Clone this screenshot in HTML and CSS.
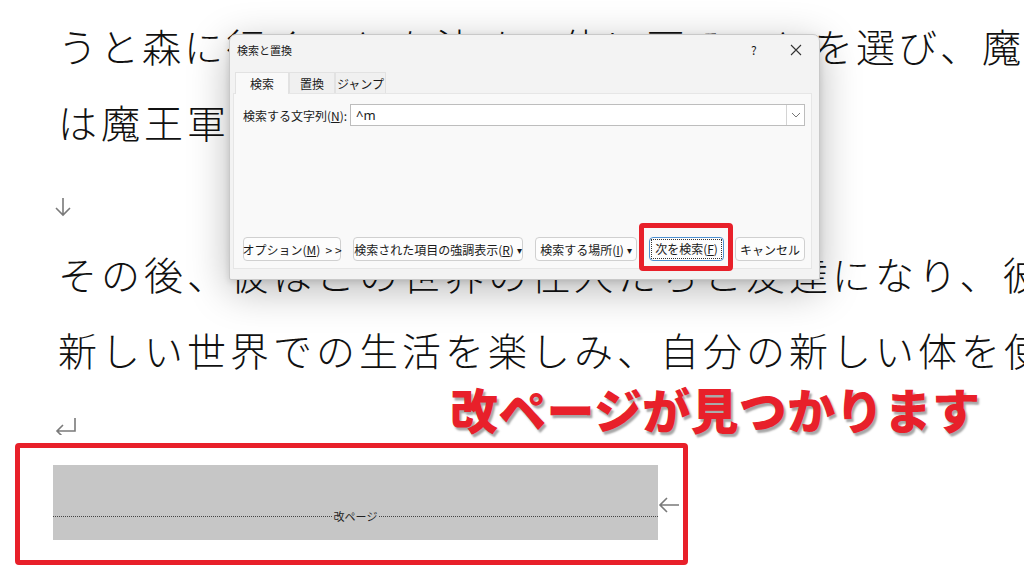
FILE: index.html
```html
<!DOCTYPE html>
<html lang="ja">
<head>
  <meta charset="UTF-8">
  <title>検索と置換 - 改ページ</title>
  <link rel="stylesheet" href="styles.css">
</head>
<body>
  <main class="doc">
    <div class="line line-tight">うと森に行くことを決め、体に戻ることを選び、魔王</div>
    <div class="line">は魔王軍の一員として戦った。</div>
    <div class="mark mark-down">
      <svg width="20" height="20" viewBox="0 0 20 20"><path d="M10 1v17M3 11l7 7 7-7" fill="none" stroke="#7a7a7a" stroke-width="1.6"/></svg>
    </div>
    <div class="line">その後、彼はこの世界の住人たちと友達になり、彼</div>
    <div class="line">新しい世界での生活を楽しみ、自分の新しい体を使</div>
    <div class="mark mark-return">
      <svg width="24" height="18" viewBox="0 0 24 18"><path d="M21 1v13H3M9 8l-6 6 6 6" fill="none" stroke="#7a7a7a" stroke-width="1.6"/></svg>
    </div>

    <section class="pb-frame">
      <div class="pb-area">
        <div class="pb-rule"><span>改ページ</span></div>
      </div>
      <svg class="pb-arrow" width="22" height="16" viewBox="0 0 22 16"><path d="M21 8H2M9 1L2 8l7 7" fill="none" stroke="#7a7a7a" stroke-width="1.6"/></svg>
    </section>
  </main>

  <p class="callout">改ページが見つかります</p>

  <div class="dialog">
    <div class="dlg-title">
      <span class="dlg-name">検索と置換</span>
      <span class="dlg-help">?</span>
      <svg class="dlg-close" width="12" height="12" viewBox="0 0 12 12"><path d="M1 1l10 10M11 1L1 11" stroke="#333" stroke-width="1.1"/></svg>
    </div>
    <div class="tabs">
      <div class="tab tab-active">検索</div>
      <div class="tab">置換</div>
      <div class="tab">ジャンプ</div>
    </div>
    <div class="panel">
      <div class="find-row">
        <span class="find-label">検索する文字列(<u>N</u>):</span>
        <div class="combo">
          <span class="combo-text">^m</span>
          <span class="combo-btn">
            <svg width="10" height="6" viewBox="0 0 10 6"><path d="M1 1l4 4 4-4" fill="none" stroke="#777" stroke-width="1"/></svg>
          </span>
        </div>
      </div>
      <div class="btn-row">
        <button class="btn btn-options">オプション(<u>M</u>)&nbsp; &gt; &gt;</button>
        <button class="btn btn-highlight">検索された項目の強調表示(<u>R</u>) <span class="caret">▾</span></button>
        <button class="btn btn-where">検索する場所(<u>I</u>) <span class="caret">▾</span></button>
        <span class="hl">
          <button class="btn btn-next"><span class="focus">次を検索(<u>F</u>)</span></button>
        </span>
        <button class="btn btn-cancel">キャンセル</button>
      </div>
    </div>
  </div>
</body>
</html>
```

FILE: styles.css
```css
body {
  margin: 0;
  background: #ffffff;
  font-family: "Liberation Serif", "Noto Sans CJK JP", serif;
  color: #111;
  overflow: hidden;
}

/* document page behind the dialog */
.doc {
  padding: 11px 0 0 58px;
  width: 1100px;
}

.line {
  height: 76px;
  line-height: 76px;
  font-size: 39px;
  font-weight: 300;
  letter-spacing: 4px;
  white-space: nowrap;
}

.line-tight {
  letter-spacing: 3px;
}

.mark {
  display: flex;
  align-items: flex-start;
  box-sizing: border-box;
}

.mark-down {
  height: 76px;
  padding-top: 34px;
  margin-left: -5px;
}

.mark-return {
  height: 52px;
  margin-left: -4px;
  padding-top: 26px;
}

/* page break, framed in red */
.pb-frame {
  display: flex;
  align-items: flex-start;
  margin-left: -43px;
  width: 630px;
  height: 95px;
  padding: 17px 0 0 33px;
  border: 5px solid #e8202a;
  border-radius: 4px;
}

.pb-area {
  flex: none;
  width: 605px;
  height: 75px;
  background: #c6c6c6;
}

.pb-rule {
  margin-top: 51px;
  border-top: 1px dotted #444;
  display: flex;
  justify-content: center;
  height: 0;
}

.pb-rule span {
  background: #c6c6c6;
  font-family: "Noto Sans CJK JP", sans-serif;
  font-size: 11px;
  line-height: 14px;
  padding: 0 2px;
  margin-top: -8px;
  height: 14px;
  color: #222;
}

.pb-arrow {
  flex: none;
  margin-top: 32px;
}

/* annotation text */
.callout {
  position: absolute;
  left: 450px;
  top: 378px;
  margin: 0;
  font-family: "Noto Sans CJK JP", sans-serif;
  font-size: 48px;
  font-weight: 900;
  line-height: 60px;
  letter-spacing: 0.3px;
  color: #e8202a;
  -webkit-text-stroke: 7px #fff;
  paint-order: stroke fill;
  text-shadow: 2px 3px 2px rgba(0,0,0,0.35);
}

/* find & replace dialog */
.dialog {
  position: absolute;
  left: 229px;
  top: 34px;
  width: 591px;
  height: 246px;
  box-sizing: border-box;
  background: #f3f3f3;
  border: 1px solid #c9c9c9;
  border-radius: 7px 7px 2px 2px;
  box-shadow: 0 10px 40px rgba(0,0,0,0.28), 0 2px 6px rgba(0,0,0,0.12);
  font-family: "Noto Sans CJK JP", sans-serif;
  font-size: 12px;
  color: #1a1a1a;
  display: flex;
  flex-direction: column;
}

.dlg-title {
  height: 29px;
  display: flex;
  align-items: center;
  padding: 0 0 0 7px;
}

.dlg-name {
  font-size: 11px;
  flex: 1;
}

.dlg-help {
  font-size: 12px;
  width: 10px;
  margin-right: 29px;
}

.dlg-close {
  margin-right: 17px;
}

.tabs {
  display: flex;
  margin: 8px 0 0 5px;
  height: 21px;
}

.tab {
  height: 21px;
  line-height: 21px;
  text-align: center;
  background: #f0f0f0;
  border: 1px solid #e2e2e2;
  border-bottom: none;
  box-sizing: border-box;
  font-size: 12px;
}

.tab:nth-child(1) { width: 54px; }
.tab:nth-child(2) { width: 46px; }
.tab:nth-child(3) { width: 51px; }

.tab-active {
  background: #f9f9f9;
  height: 22px;
  margin-bottom: -1px;
  position: relative;
}

.panel {
  margin: 0 7px 10px 3px;
  flex: 1;
  background: #f9f9f9;
  border: 1px solid #e6e6e6;
  display: flex;
  flex-direction: column;
  justify-content: space-between;
  padding: 10px 6px 7px 9px;
}

.find-row {
  display: flex;
  align-items: center;
}

.find-label {
  width: 107px;
}

.combo {
  flex: 1;
  height: 22px;
  box-sizing: border-box;
  background: #fff;
  border: 1px solid #bdbdbd;
  display: flex;
  align-items: center;
}

.combo-text {
  flex: 1;
  padding-left: 5px;
  font-family: "Noto Sans", sans-serif;
  font-size: 13px;
}

.combo-btn {
  width: 17px;
  height: 20px;
  border-left: 1px solid #d4d4d4;
  display: flex;
  align-items: center;
  justify-content: center;
}

.btn-row {
  display: flex;
  gap: 12px;
}

.btn {
  height: 24px;
  box-sizing: border-box;
  background: #fdfdfd;
  border: 1px solid #d0d0d0;
  border-radius: 4px;
  font-family: "Noto Sans CJK JP", sans-serif;
  font-size: 12px;
  color: #1a1a1a;
  padding: 0;
  display: flex;
  align-items: center;
  justify-content: center;
  white-space: nowrap;
}

.caret {
  font-size: 10px;
  margin-left: 3px;
}

.btn-options { width: 98px; }
.btn-highlight { width: 170px; }
.btn-where { width: 102px; }
.btn-next { width: 75px; border-color: #4d90d0; }
.btn-cancel { width: 70px; margin-left: -1px; }

.focus {
  border: 1px dotted #333;
  padding: 1px 3px;
  line-height: 16px;
}

/* red highlight around the next button */
.hl {
  position: relative;
  display: flex;
}

.hl::after {
  content: "";
  position: absolute;
  left: -10px;
  top: -14px;
  right: -9px;
  bottom: -10px;
  border: 5px solid #e8202a;
  border-radius: 4px;
}
```
